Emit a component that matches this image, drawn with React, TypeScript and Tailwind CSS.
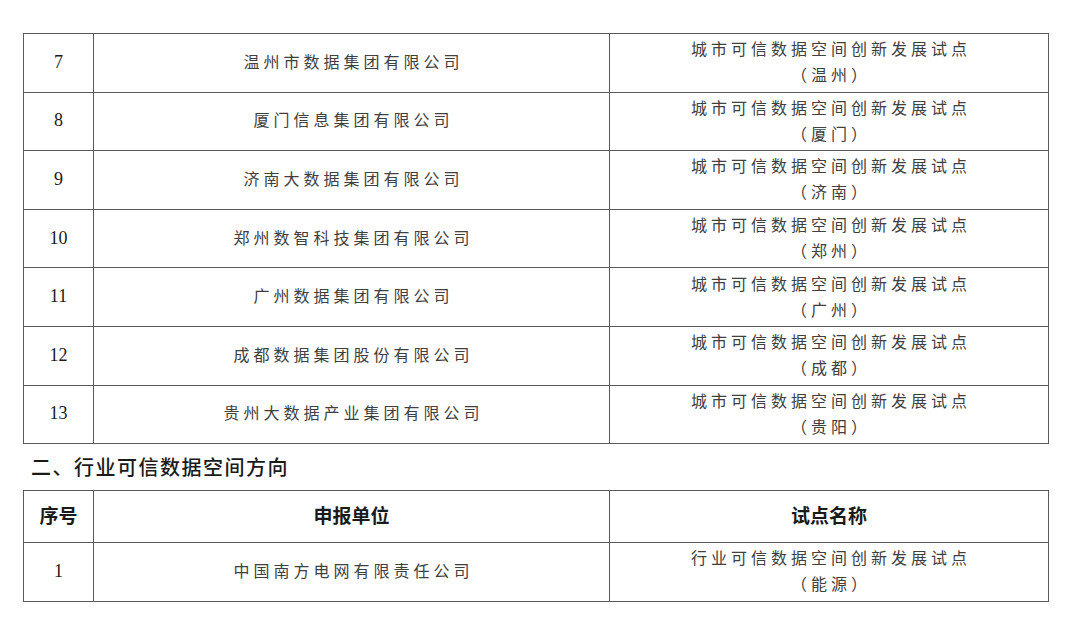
import React from "react";

const cjk = { fontFamily: '"Noto Sans CJK SC", "Noto Sans", sans-serif' };
const serif = { fontFamily: '"Liberation Serif", "Noto Sans CJK SC", serif' };

const rows1 = [
  { n: "7", org: "温州市数据集团有限公司", city: "温州" },
  { n: "8", org: "厦门信息集团有限公司", city: "厦门" },
  { n: "9", org: "济南大数据集团有限公司", city: "济南" },
  { n: "10", org: "郑州数智科技集团有限公司", city: "郑州" },
  { n: "11", org: "广州数据集团有限公司", city: "广州" },
  { n: "12", org: "成都数据集团股份有限公司", city: "成都" },
  { n: "13", org: "贵州大数据产业集团有限公司", city: "贵阳" },
];

function Row({
  n,
  org,
  l1,
  l2,
}: {
  n: string;
  org: string;
  l1: string;
  l2: string;
}) {
  return (
    <div className="grid grid-cols-[70px_516px_439px] h-[58.6px]">
      <div
        className="border-r border-b border-[#5a5a5a] flex items-center justify-center text-[18px] text-[#1a1a1a] box-border pb-[1px]"
        style={serif}
      >
        {n}
      </div>
      <div
        className="border-r border-b border-[#5a5a5a] flex items-center justify-center text-[16px] tracking-[4px] text-[#404040] box-border pl-[4px] pb-[4px]"
        style={cjk}
      >
        {org}
      </div>
      <div
        className="border-r border-b border-[#5a5a5a] flex flex-col items-center justify-center text-[16px] tracking-[4px] leading-[26px] text-[#404040] box-border pb-[3px]"
        style={cjk}
      >
        <span className="pl-[4px]">{l1}</span>
        <span className="pl-[4px]">（{l2}）</span>
      </div>
    </div>
  );
}

export default function App() {
  return (
    <div className="w-[1080px] h-[625px] bg-white pt-[33px] pl-[23px] overflow-hidden">
      <div className="w-[1026px] border-t border-l border-[#5a5a5a]">
        {rows1.map((r) => (
          <Row
            key={r.n}
            n={r.n}
            org={r.org}
            l1="城市可信数据空间创新发展试点"
            l2={r.city}
          />
        ))}
      </div>
      <div
        className="h-[46px] flex items-center pl-[8px] pb-[1px] text-[20px] tracking-[1.5px] font-medium text-[#1a1a1a]"
        style={cjk}
      >
        二、行业可信数据空间方向
      </div>
      <div className="w-[1026px] border-t border-l border-[#5a5a5a]">
        <div className="grid grid-cols-[70px_516px_439px] h-[52px]">
          <div
            className="border-r border-b border-[#5a5a5a] flex items-center justify-center text-[19px] font-bold text-[#1a1a1a] pb-[2px]"
            style={cjk}
          >
            序号
          </div>
          <div
            className="border-r border-b border-[#5a5a5a] flex items-center justify-center text-[19px] font-bold text-[#1a1a1a] pb-[2px]"
            style={cjk}
          >
            申报单位
          </div>
          <div
            className="border-r border-b border-[#5a5a5a] flex items-center justify-center text-[19px] font-bold text-[#1a1a1a] pb-[2px]"
            style={cjk}
          >
            试点名称
          </div>
        </div>
        <Row
          n="1"
          org="中国南方电网有限责任公司"
          l1="行业可信数据空间创新发展试点"
          l2="能源"
        />
      </div>
    </div>
  );
}
